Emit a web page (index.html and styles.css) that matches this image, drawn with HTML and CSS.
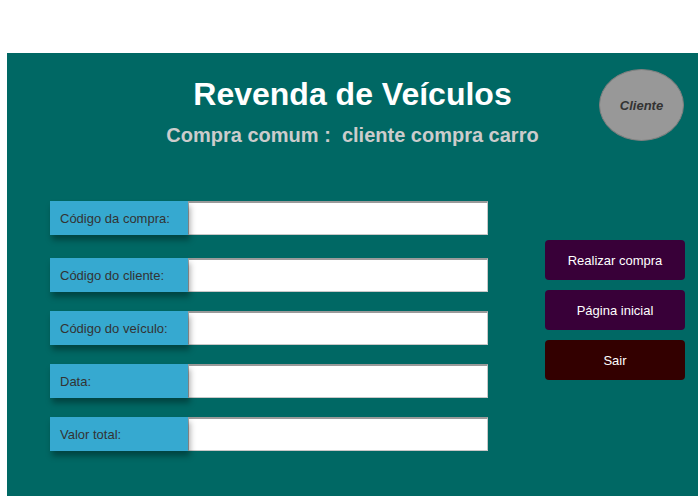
FILE: index.html
```html
<!DOCTYPE html>
<html lang="pt">
<head>
<meta charset="utf-8">
<link rel="stylesheet" href="styles.css">
</head>
<body>
<div class="topgap"></div>
<div class="panel">
  <header class="header">
    <div class="side"></div>
    <div class="titles">
      <h1 class="title">Revenda de Veículos</h1>
      <h2 class="subtitle">Compra comum :&nbsp; cliente compra carro</h2>
    </div>
    <div class="side side-right">
      <div class="badge">Cliente</div>
    </div>
  </header>
  <main class="main">
    <form class="form">
      <div class="row row-first"><label class="label">Código da compra:</label><input class="field" type="text"></div>
      <div class="row"><label class="label">Código do cliente:</label><input class="field" type="text"></div>
      <div class="row"><label class="label">Código do veículo:</label><input class="field" type="text"></div>
      <div class="row"><label class="label">Data:</label><input class="field" type="text"></div>
      <div class="row"><label class="label">Valor total:</label><input class="field" type="text"></div>
    </form>
    <div class="actions">
      <button class="btn btn-purple" type="button">Realizar compra</button>
      <button class="btn btn-purple" type="button">Página inicial</button>
      <button class="btn btn-red" type="button">Sair</button>
    </div>
  </main>
</div>
</body>
</html>
```
FILE: styles.css
```css
html, body {
  margin: 0;
  padding: 0;
  background: #ffffff;
  font-family: "Liberation Sans", Arial, sans-serif;
}
.topgap {
  height: 53px;
}
.panel {
  margin-left: 7px;
  height: 443px;
  background: #006864;
  overflow: hidden;
}
.header {
  display: grid;
  grid-template-columns: 1fr auto 1fr;
  padding-top: 16px;
}
.side-right {
  display: flex;
  justify-content: flex-end;
  align-items: flex-start;
}
.badge {
  width: 83px;
  height: 70px;
  margin-right: 14px;
  border: 1px solid #7f7f7f;
  border-radius: 50%;
  background: #989898;
  color: #333333;
  font-style: italic;
  font-weight: bold;
  font-size: 13px;
  display: flex;
  align-items: center;
  justify-content: center;
}
.titles {
  text-align: center;
  padding-top: 7px;
}
.title {
  margin: 0;
  font-size: 32px;
  line-height: 36px;
  font-weight: bold;
  color: #ffffff;
}
.subtitle {
  margin: 12px 0 0;
  font-size: 20px;
  line-height: 22px;
  font-weight: bold;
  color: #cccccc;
}
.main {
  display: flex;
  margin-top: 55px;
  padding-left: 43px;
}
.form {
  display: flex;
  flex-direction: column;
  gap: 19px;
  margin: 0;
}
.row {
  display: flex;
  height: 34px;
}
.row-first {
  margin-bottom: 4px;
}
.label {
  width: 128px;
  padding-left: 10px;
  background: #36a9d0;
  color: #333333;
  font-size: 13px;
  display: flex;
  align-items: center;
  box-shadow: 2px 5px 6px rgba(0, 0, 0, 0.35);
  position: relative;
}
.field {
  box-sizing: border-box;
  width: 300px;
  height: 34px;
  margin: 0;
  padding: 0 4px;
  background: #ffffff;
  border: 1px solid #c8c8c8;
  border-top: 2px solid #9a9a9a;
  border-left-color: #a8a8a8;
  font-family: "Liberation Sans", Arial, sans-serif;
  font-size: 13px;
  outline: none;
}
.actions {
  display: flex;
  flex-direction: column;
  gap: 10px;
  margin-left: 57px;
  padding-top: 39px;
}
.btn {
  width: 140px;
  height: 40px;
  border: none;
  border-radius: 4px;
  color: #ffffff;
  font-family: "Liberation Sans", Arial, sans-serif;
  font-size: 13px;
  padding: 0;
  cursor: pointer;
}
.btn-purple {
  background: #380038;
}
.btn-red {
  background: #330000;
}
```
